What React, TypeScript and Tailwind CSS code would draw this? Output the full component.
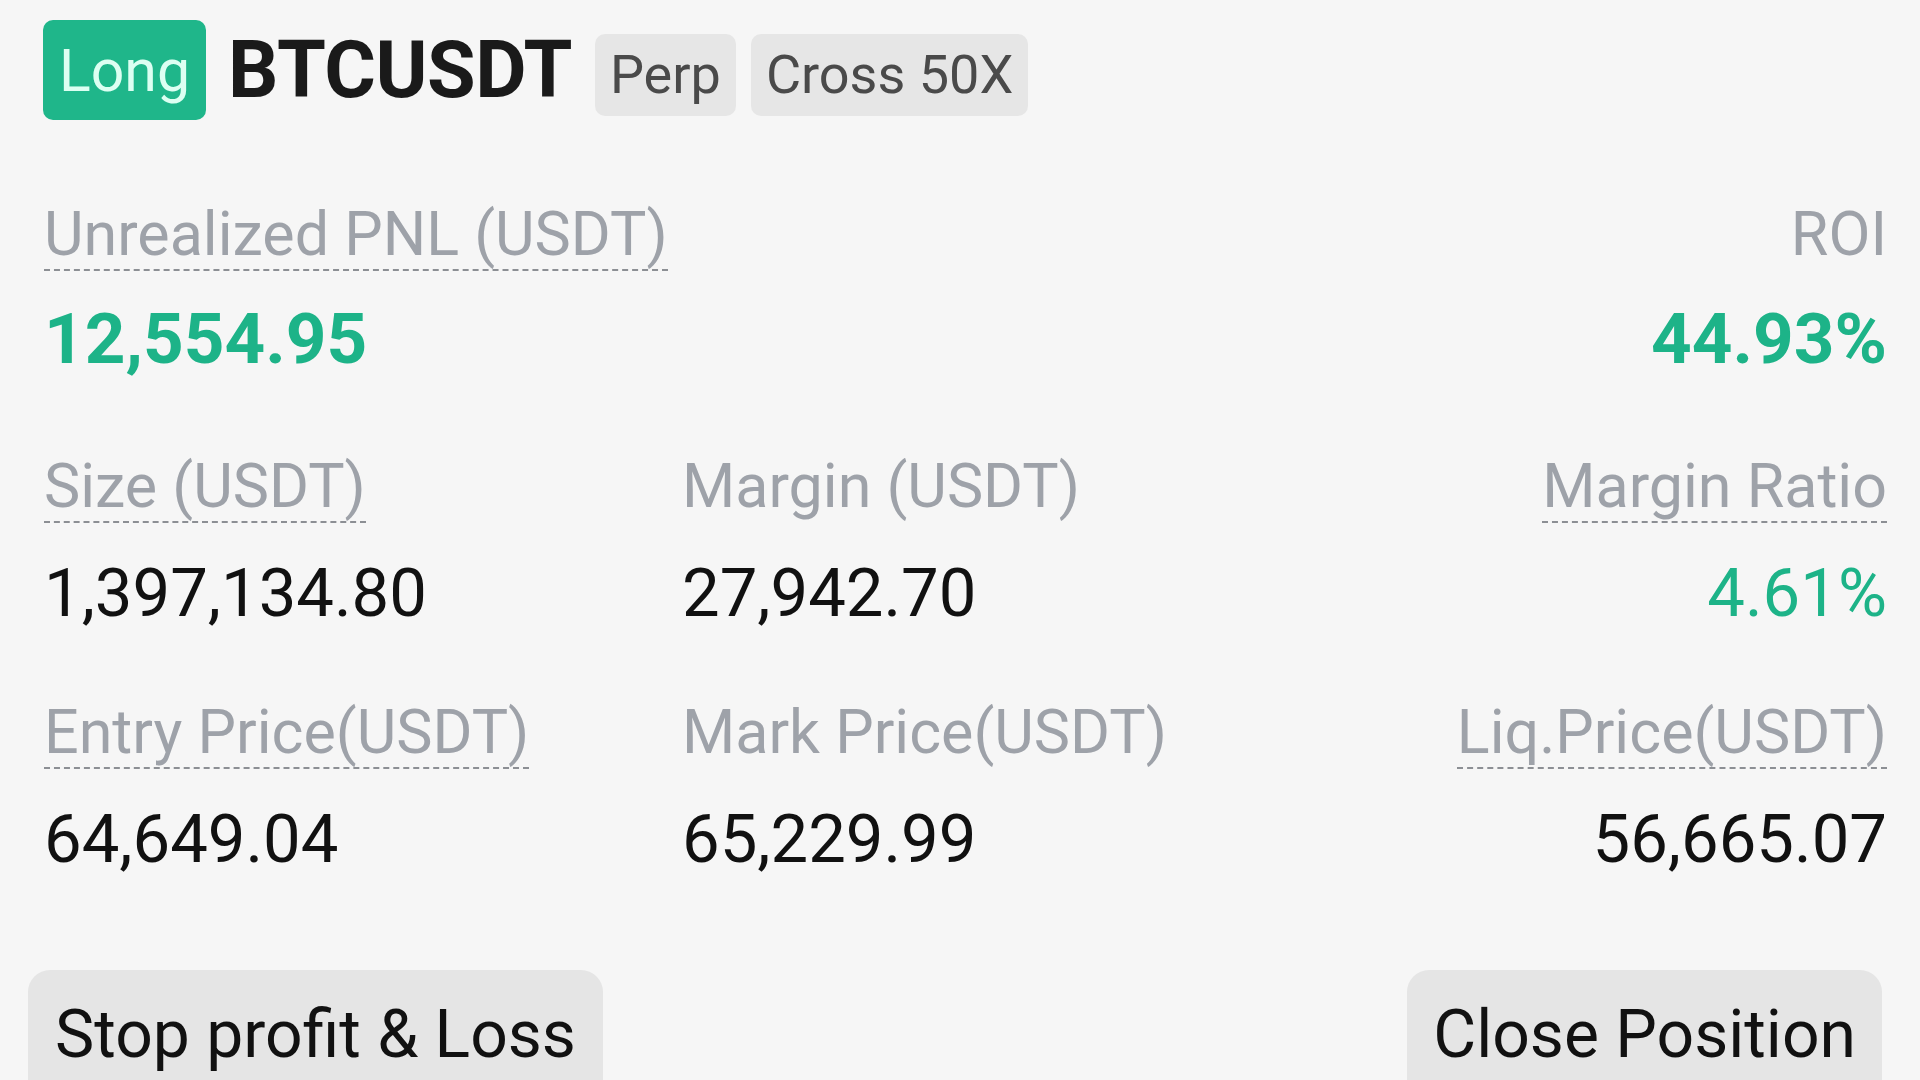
import React from "react";

const Label = ({ children }: { children: React.ReactNode }) => (
  <span className="inline-block text-[61px] leading-[70px] text-[#9ea2a9] border-b-2 border-dashed border-[#8c8f94] whitespace-nowrap">
    {children}
  </span>
);

const PlainLabel = ({ children }: { children: React.ReactNode }) => (
  <span className="inline-block text-[61px] leading-[70px] text-[#9ea2a9] border-b-2 border-transparent whitespace-nowrap">
    {children}
  </span>
);

type Cell = { label: React.ReactNode; value: string; green?: boolean };

const Row = ({ cells, mt }: { cells: [Cell, Cell | null, Cell]; mt: string }) => {
  const [a, b, c] = cells;
  return (
    <div className={`flex ${mt}`}>
      <div className="w-[638px] flex flex-col items-start">
        {a.label}
        <div className={`mt-[36px] text-[67px] leading-[68px] whitespace-nowrap ${a.green ? "text-[#1db388]" : "text-[#111111]"}`}>{a.value}</div>
      </div>
      <div className="flex-1 flex flex-col items-start">
        {b && (
          <>
            {b.label}
            <div className="mt-[36px] text-[67px] leading-[68px] text-[#111111] whitespace-nowrap">{b.value}</div>
          </>
        )}
      </div>
      <div className="flex flex-col items-end">
        {c.label}
        <div className={`mt-[36px] text-[67px] leading-[68px] whitespace-nowrap ${c.green ? "text-[#1db388]" : "text-[#111111]"}`}>{c.value}</div>
      </div>
    </div>
  );
};

export default function App() {
  return (
    <div className="w-[1920px] h-[1080px] overflow-hidden bg-[#f6f6f6] pl-[44px] pr-[33px] pt-[20px] font-['Roboto',sans-serif]">
      {/* Header */}
      <div className="flex items-start">
        <div className="-ml-[1px] h-[100px] w-[163px] rounded-[10px] bg-[#1fb68a] text-[#dcfff2] text-[59px] leading-none flex items-center justify-center">
          Long
        </div>
        <div className="ml-[22px] h-[100px] flex items-center text-[79px] font-bold text-[#1a1a1a] leading-none tracking-[-0.5px]">
          BTCUSDT
        </div>
        <div className="ml-[23px] mt-[14px] h-[82px] px-[15px] rounded-[10px] bg-[#e6e6e6] text-[#4a4a4a] text-[54px] leading-none flex items-center">
          Perp
        </div>
        <div className="ml-[15px] mt-[14px] h-[82px] px-[15px] rounded-[10px] bg-[#e6e6e6] text-[#4a4a4a] text-[54px] leading-none flex items-center">
          Cross 50X
        </div>
      </div>

      {/* PNL / ROI */}
      <div className="mt-[79px] flex justify-between">
        <div className="flex flex-col items-start">
          <Label>Unrealized PNL (USDT)</Label>
          <div className="mt-[32px] text-[71px] leading-[71px] font-bold text-[#1db388]">12,554.95</div>
        </div>
        <div className="flex flex-col items-end">
          <PlainLabel>ROI</PlainLabel>
          <div className="mt-[32px] text-[71px] leading-[71px] font-bold text-[#1db388]">44.93%</div>
        </div>
      </div>

      <Row
        mt="mt-[77px]"
        cells={[
          { label: <Label>Size (USDT)</Label>, value: "1,397,134.80" },
          { label: <PlainLabel>Margin (USDT)</PlainLabel>, value: "27,942.70" },
          { label: <Label>Margin Ratio</Label>, value: "4.61%", green: true },
        ]}
      />

      <Row
        mt="mt-[70px]"
        cells={[
          { label: <Label>Entry Price(USDT)</Label>, value: "64,649.04" },
          { label: <PlainLabel>Mark Price(USDT)</PlainLabel>, value: "65,229.99" },
          { label: <Label>Liq.Price(USDT)</Label>, value: "56,665.07" },
        ]}
      />

      {/* Buttons */}
      <div className="mt-[97px] -ml-[16px] mr-[5px] flex justify-between">
        <button className="h-[160px] px-[27px] pt-[25px] rounded-[22px] bg-[#e5e5e5] text-[66px] leading-[80px] text-[#111111] self-start flex items-start">
          Stop profit &amp; Loss
        </button>
        <button className="h-[160px] px-[26px] pt-[25px] rounded-[22px] bg-[#e5e5e5] text-[66px] leading-[80px] text-[#111111] self-start flex items-start">
          Close Position
        </button>
      </div>
    </div>
  );
}
